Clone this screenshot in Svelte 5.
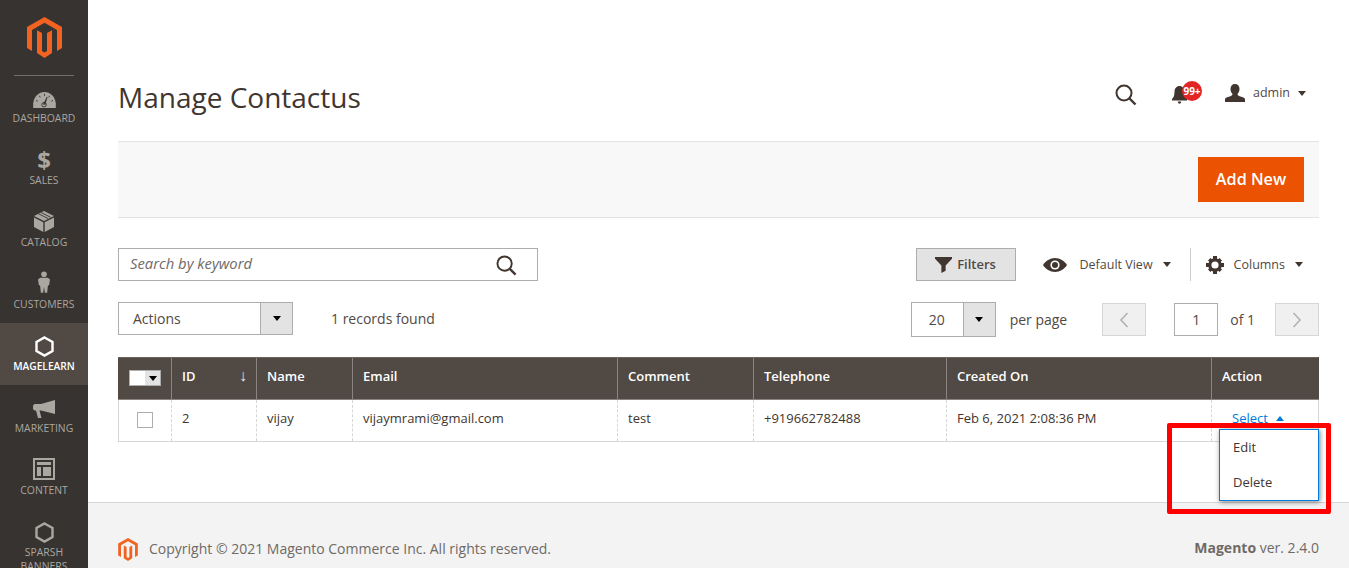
<script>
	const nav = [
		{ label: 'Dashboard', icon: 'gauge' },
		{ label: 'Sales', icon: 'dollar' },
		{ label: 'Catalog', icon: 'box' },
		{ label: 'Customers', icon: 'person' },
		{ label: 'Magelearn', icon: 'hex', active: true },
		{ label: 'Marketing', icon: 'horn' },
		{ label: 'Content', icon: 'layout' },
		{ label: 'Sparsh Banners', icon: 'hex' }
	];
	const columns = [
		{ label: 'Name', width: 96 },
		{ label: 'Email', width: 265 },
		{ label: 'Comment', width: 136 },
		{ label: 'Telephone', width: 193 },
		{ label: 'Created On', width: 265 }
	];
	const row = ['vijay', 'vijaymrami@gmail.com', 'test', '+919662782488', 'Feb 6, 2021 2:08:36 PM'];
</script>

{#snippet logo(cls)}
	<svg class={cls} viewBox="0 0 35 41">
		<path d="M17.5 0 35 10v21l-5 2.9V13L17.5 5.8 5 13v20.9L0 31V10z" fill="#f26322" />
		<path d="M10 13.2v22.9l7.5 4.9 7.5-4.9V13.2l-5 2.9V34l-2.5 1.5L15 34V16.1z" fill="#f26322" />
	</svg>
{/snippet}

{#snippet search(cls)}
	<svg class={cls} viewBox="0 0 22 22">
		<circle cx="9" cy="9" r="7.5" fill="none" stroke="#41362f" stroke-width="2" />
		<path d="m14.5 14.5 6 6" stroke="#41362f" stroke-width="2.4" />
	</svg>
{/snippet}

<div class="page">
	<aside class="sidebar">
		<div class="logo-wrap">
			{@render logo('logo')}
		</div>
		<nav>
			{#each nav as item}
				<a class="nav-item" class:active={item.active} href="#top">
					<span class="nav-icon">
						{#if item.icon === 'gauge'}
							<svg width="23" height="16" viewBox="0 0 24 17">
								<path d="M0 17v-5C1 4.500 6 0 12 0s11 4.500 12 12v5z" fill="currentColor" />
								<path d="m10.500 13 4-8 .8.4-2.600 8.400z" fill="#373330" />
								<circle cx="11.500" cy="13.500" r="2.400" fill="none" stroke="#373330" stroke-width="1" />
								<path d="M12 2v2M6.500 4l1 1.600M17.500 4l-1 1.600M3 9l1.800.8M21 9l-1.800.8" stroke="#373330" stroke-width="1" />
							</svg>
						{:else if item.icon === 'dollar'}
							<span class="dollar">$</span>
						{:else if item.icon === 'box'}
							<svg width="20" height="21" viewBox="0 0 20 21">
								<path d="M10 0 20 5 10 10 0 5z" fill="currentColor" />
								<path d="M4.500 2.800 14.200 7.600M7 1.500 16.700 6.300" stroke="#373330" stroke-width=".9" />
								<path d="M0 6.500 9.300 11.300V21L0 16zM20 6.500V16L10.700 21V11.300z" fill="currentColor" />
							</svg>
						{:else if item.icon === 'person'}
							<svg width="12" height="24" viewBox="0 0 14 25">
								<circle cx="7" cy="3.500" r="3.300" fill="currentColor" />
								<path d="M2.500 7.500h9L14 9.500 13 16l-1.500 1-.8 8H8l-1-7-1 7H3.300l-.8-8L1 16 0 9.500z" fill="currentColor" />
							</svg>
						{:else if item.icon === 'hex'}
							<svg class="hex" width="19" height="21" viewBox="0 0 19 21">
								<path d="M9.500 1.500 17.500 6v9l-8 4.500-8-4.500V6z" fill="none" stroke="currentColor" stroke-width="2.400" />
							</svg>
						{:else if item.icon === 'horn'}
							<svg width="22" height="18" viewBox="0 0 22 18">
								<path d="M22 0v14L8 10.500H6.500L8.500 18H5L3 10.500H1.500L0 9V5.500L1.500 4H8z" fill="currentColor" />
							</svg>
						{:else if item.icon === 'layout'}
							<svg width="22" height="22" viewBox="0 0 22 22">
								<path d="M0 0h22v22H0zM2 2v18h18V2z" fill="currentColor" />
								<path d="M4 4h14v3H4zM4 9h4v9H4zM10 9h8v9h-8z" fill="currentColor" />
							</svg>
						{/if}
					</span>
					<span class="nav-label">{item.label}</span>
				</a>
			{/each}
		</nav>
	</aside>

	<div class="main">
		<div class="content">
			<header class="page-header">
				<h1>Manage Contactus</h1>
				<div class="header-tools">
					{@render search('head-search')}
					<span class="bell">
						<svg width="15" height="18" viewBox="0 0 15 18">
							<path d="M7.500 0C10.500 0 12.500 2.500 12.500 6c0 4 1 5.500 2.500 7v1.500H0V13c1.500-1.500 2.500-3 2.500-7 0-3.500 2-6 5-6zM5.800 15.500h3.400c0 1.300-.7 2.200-1.700 2.200s-1.700-.9-1.700-2.200z" fill="#41362f" />
						</svg>
						<span class="badge">99+</span>
					</span>
					<span class="user">
						<svg width="20" height="18" viewBox="0 0 20 18">
							<path d="M10 0c3 0 4.500 2 4.500 5 0 2-.8 3.800-2 5 .2 1 .6 1.500 1.500 2 3 1 5.500 1.500 6 3v3H0v-3c.5-1.500 3-2 6-3 .9-.5 1.300-1 1.500-2-1.200-1.200-2-3-2-5 0-3 1.500-5 4.500-5z" fill="#41362f" />
						</svg>
						<span class="user-name">admin</span>
						<i class="caret"></i>
					</span>
				</div>
			</header>

			<div class="action-bar">
				<button class="add-new">Add New</button>
			</div>

			<div class="grid-top">
				<div class="search-box">
					<span class="placeholder">Search by keyword</span>
					{@render search('box-search')}
				</div>
				<div class="grid-controls">
					<button class="filters">
						<svg width="17" height="16" viewBox="0 0 16 15">
							<path d="M0 0h16v1.500L10 8v5l-4 2V8L0 1.500z" fill="#41362f" />
						</svg>
						<span>Filters</span>
					</button>
					<span class="view">
						<svg width="24" height="14" viewBox="0 0 24 14">
							<path d="M12 0c5 0 9.500 3 12 7-2.500 4-7 7-12 7S2.500 11 0 7c2.500-4 7-7 12-7z" fill="#41362f" />
							<circle cx="12" cy="7" r="4.600" fill="#fff" />
							<circle cx="12" cy="7" r="3" fill="#41362f" />
						</svg>
						<span class="view-label">Default View</span>
						<i class="caret"></i>
					</span>
					<span class="columns">
						<svg width="18" height="18" viewBox="0 0 18 18">
							<circle cx="9" cy="9" r="5.200" fill="none" stroke="#41362f" stroke-width="3.200" />
							<path d="M7 0h4v3H7zM7 15h4v3H7zM0 7h3v4H0zM15 7h3v4h-3zM2 4.500 4.500 2l2 2L4 6.500zM13.500 2 16 4.500l-2 2L11.500 4zM2 13.500 4.500 16l2-2L4 11.500zM16 13.500 13.500 16l-2-2 2.500-2.500z" fill="#41362f" />
						</svg>
						<span class="view-label">Columns</span>
						<i class="caret"></i>
					</span>
				</div>
			</div>

			<div class="grid-pager">
				<div class="select actions-select">
					<span class="select-value">Actions</span>
					<span class="select-arrow"><i class="caret dark"></i></span>
				</div>
				<span class="records">1 records found</span>
				<div class="pager">
					<div class="select per-page">
						<span class="select-value">20</span>
						<span class="select-arrow"><i class="caret dark"></i></span>
					</div>
					<span class="per-label">per page</span>
					<span class="page-btn prev">
						<svg width="10" height="16" viewBox="0 0 10 16"><path d="M8.500 1 2 8l6.500 7" fill="none" stroke="#b5b2ae" stroke-width="1.600" /></svg>
					</span>
					<span class="page-input">1</span>
					<span class="of">of 1</span>
					<span class="page-btn">
						<svg width="10" height="16" viewBox="0 0 10 16"><path d="M1.500 1 8 8l-6.500 7" fill="none" stroke="#b5b2ae" stroke-width="1.600" /></svg>
					</span>
				</div>
			</div>

			<table class="grid">
				<colgroup>
					<col style="width: 53px" />
					<col style="width: 85px" />
					{#each columns as c}
						<col style="width: {c.width}px" />
					{/each}
					<col />
				</colgroup>
				<thead>
					<tr>
						<th class="check-col">
							<span class="multi"><i class="multi-box"></i><i class="multi-arrow"><i class="caret small"></i></i></span>
						</th>
						<th class="id-col">ID<span class="sort">↓</span></th>
						{#each columns as c}
							<th>{c.label}</th>
						{/each}
						<th>Action</th>
					</tr>
				</thead>
				<tbody>
					<tr>
						<td class="check-col"><i class="checkbox"></i></td>
						<td>2</td>
						{#each row as value}
							<td>{value}</td>
						{/each}
						<td class="action-cell"><a href="#top" class="select-link">Select<i class="caret up"></i></a></td>
					</tr>
				</tbody>
			</table>
		</div>

		<footer class="footer">
			<div class="copyright">
				{@render logo('footer-logo')}
				<span>Copyright © 2021 Magento Commerce Inc. All rights reserved.</span>
			</div>
			<div class="version">
				<div><strong>Magento</strong> ver. 2.4.0</div>
				<a href="#top">Account Activity</a>
			</div>
		</footer>

		<div class="row-menu">
			<a href="#top">Edit</a>
			<a href="#top">Delete</a>
		</div>
		<div class="highlight"></div>
	</div>
</div>

<style>
	:global(body) {
		margin: 0;
		overflow: hidden;
		background: #fff;
		font-family: 'Open Sans', sans-serif;
		color: #41362f;
	}
	.page {
		display: flex;
		height: 568px;
		overflow: hidden;
	}
	.sidebar {
		flex: 0 0 88px;
		background: #373330;
	}
	.logo-wrap {
		height: 76px;
		box-sizing: border-box;
		padding-top: 17px;
		margin: 0 14px -1px;
		border-bottom: 1px solid #736e6a;
		display: flex;
		justify-content: center;
	}
	.logo {
		width: 35px;
		height: 41px;
	}
	.nav-item {
		height: 62px;
		display: flex;
		flex-direction: column;
		align-items: center;
		color: #aaa6a0;
		text-decoration: none;
	}
	.nav-item.active {
		background: #514943;
		color: #fff;
	}
	.nav-icon {
		height: 33px;
		flex: 0 0 33px;
		margin-bottom: 3px;
		display: flex;
		align-items: flex-end;
		justify-content: center;
	}
	.nav-icon .hex {
		position: relative;
		top: 1px;
	}
	.dollar {
		font: 700 24px/20px 'Open Sans', sans-serif;
	}
	.nav-label {
		font-size: 10.4px;
		line-height: 14px;
		text-transform: uppercase;
		text-align: center;
		width: 70px;
	}
	.active .nav-label {
		font-size: 10.2px;
		font-weight: 600;
	}
	.main {
		flex: 1;
		position: relative;
		display: flex;
		flex-direction: column;
		min-width: 0;
	}
	.content {
		height: 502px;
		box-sizing: border-box;
		padding: 0 30px;
	}
	.page-header {
		height: 141px;
		display: flex;
		justify-content: space-between;
		align-items: flex-start;
	}
	h1 {
		margin: 77px 0 0;
		font-size: 28px;
		line-height: 40px;
		font-weight: 400;
	}
	.header-tools {
		display: flex;
		align-items: center;
		height: 24px;
		margin-top: 81px;
		margin-right: 13px;
	}
	.head-search {
		width: 22px;
		height: 22px;
		margin-right: 35px;
		position: relative;
		top: 2px;
	}
	.bell {
		position: relative;
		display: block;
		width: 15px;
		height: 18px;
		margin-right: 38px;
		margin-top: 3px;
	}
	.bell svg {
		display: block;
	}
	.badge {
		position: absolute;
		left: 10px;
		top: -5px;
		width: 20px;
		height: 20px;
		border-radius: 50%;
		background: #e22626;
		color: #fff;
		font-size: 10px;
		font-weight: 700;
		line-height: 20px;
		text-align: center;
	}
	.user {
		display: flex;
		align-items: center;
	}
	.user-name {
		font-size: 12.5px;
		margin-left: 8px;
		margin-right: 8px;
		color: #514943;
		position: relative;
		top: -1px;
	}
	.caret {
		display: inline-block;
		width: 0;
		height: 0;
		border-left: 4px solid transparent;
		border-right: 4px solid transparent;
		border-top: 5px solid #41362f;
	}
	.caret.dark {
		border-top-color: #000;
	}
	.caret.small {
		border-top: 5px solid #000;
	}
	.caret.up {
		border-top: 0;
		border-bottom: 5px solid #007bdb;
		margin-left: 8px;
		vertical-align: 2px;
	}
	.action-bar {
		height: 77px;
		box-sizing: border-box;
		border-top: 1px solid #e3e3e3;
		border-bottom: 1px solid #e3e3e3;
		background: #f8f8f8;
		display: flex;
		justify-content: flex-end;
		padding: 15px 15px 0 0;
	}
	.add-new {
		width: 106px;
		height: 45px;
		border: 0;
		padding: 0 0 2px;
		background: #eb5202;
		color: #fff;
		font: 600 16.2px 'Open Sans', sans-serif;
	}
	.grid-top {
		display: flex;
		justify-content: space-between;
		margin-top: 30px;
		height: 33px;
	}
	.search-box {
		width: 420px;
		box-sizing: border-box;
		border: 1px solid #adadad;
		display: flex;
		align-items: center;
		justify-content: space-between;
		padding: 0 20px 0 11px;
	}
	.placeholder {
		font-style: italic;
		font-size: 14.8px;
		color: #6f6a66;
		position: relative;
		top: -2px;
	}
	.box-search {
		width: 21px;
		height: 21px;
		margin-top: 1px;
	}
	.grid-controls {
		display: flex;
		align-items: center;
		height: 33px;
	}
	.filters {
		width: 100px;
		height: 33px;
		box-sizing: border-box;
		border: 1px solid #adadad;
		background: #e3e3e3;
		color: #514943;
		font: 600 13px 'Open Sans', sans-serif;
		display: flex;
		align-items: center;
		justify-content: center;
		gap: 5px;
		padding: 0;
	}
	.filters span {
		position: relative;
		top: -1px;
	}
	.view {
		display: flex;
		align-items: center;
		margin-left: 27px;
		padding-right: 19px;
		height: 33px;
		border-right: 1px solid #ccc;
	}
	.view-label {
		font-size: 12.5px;
		color: #514943;
		margin: 0 10px 0 13px;
	}
	.columns {
		display: flex;
		align-items: center;
		margin-left: 15px;
		margin-right: 16px;
	}
	.columns .view-label {
		margin: 0 10px 0 10px;
	}
	.grid-pager {
		display: flex;
		align-items: flex-start;
		margin-top: 21px;
		height: 33px;
	}
	.select {
		height: 33px;
		box-sizing: border-box;
		border: 1px solid #adadad;
		display: flex;
		font-size: 14px;
	}
	.select-value {
		flex: 1;
		line-height: 31px;
		color: #41362f;
	}
	.select-arrow {
		width: 31px;
		background: #e3e3e3;
		border-left: 1px solid #adadad;
		display: flex;
		align-items: center;
		justify-content: center;
	}
	.actions-select {
		width: 175px;
	}
	.actions-select .select-value {
		padding-left: 14px;
		color: #514943;
	}
	.records {
		margin-left: 38px;
		font-size: 14px;
		line-height: 33px;
		color: #514943;
	}
	.pager {
		margin-left: auto;
		height: 35px;
		display: flex;
		align-items: center;
	}
	.per-page {
		width: 85px;
		height: 35px;
	}
	.per-page .select-value {
		padding-left: 17px;
		line-height: 33px;
		color: #514943;
	}
	.per-label {
		margin: 0 35px 0 14px;
		font-size: 14px;
		color: #514943;
	}
	.page-btn {
		width: 44px;
		height: 33px;
		box-sizing: border-box;
		border: 1px solid #d6d6d6;
		background: #f0f0f0;
		display: flex;
		align-items: center;
		justify-content: center;
	}
	.page-input {
		width: 44px;
		height: 33px;
		box-sizing: border-box;
		border: 1px solid #adadad;
		margin-left: 28px;
		font-size: 14px;
		line-height: 31px;
		text-align: center;
		color: #514943;
	}
	.of {
		margin: 0 20px 0 12px;
		font-size: 14px;
		color: #514943;
	}
	.grid {
		margin-top: 22px;
		width: 1201px;
		border-collapse: collapse;
		table-layout: fixed;
		font-size: 13px;
	}
	.grid th {
		height: 42px;
		box-sizing: border-box;
		padding: 0 10px 5px;
		background: #514943;
		color: #fff;
		font-weight: 600;
		text-align: left;
		border-left: 1px solid #8a837f;
		border-bottom: 1px solid #8a837f;
		border-top: 1px solid #6b625c;
	}
	.grid th:first-child {
		border-left-color: #514943;
	}
	.grid th:last-child {
		border-right: 1px solid #514943;
	}
	.id-col {
		position: relative;
	}
	.sort {
		position: absolute;
		right: 9px;
		top: 6px;
		font-size: 16px;
		font-weight: 400;
		color: #e3e3e3;
	}
	.grid td {
		height: 42px;
		box-sizing: border-box;
		padding: 0 10px 5px;
		color: #41362f;
		border-left: 1px dashed #d6d6d6;
		border-bottom: 1px solid #d6d6d6;
	}
	.grid td:first-child {
		border-left: 1px solid #d6d6d6;
	}
	.grid td:last-child {
		border-right: 1px solid #d6d6d6;
	}
	.grid th.check-col {
		padding: 0 0 3px;
		text-align: center;
	}
	.grid td.check-col {
		padding: 0 0 3px;
		text-align: center;
	}
	.grid td.action-cell {
		padding-left: 20px;
	}
	.multi {
		display: inline-flex;
		vertical-align: middle;
		border: 1px solid #adadad;
	}
	.multi-box {
		display: block;
		width: 15px;
		height: 14px;
		background: #fff;
	}
	.multi-arrow {
		display: flex;
		align-items: center;
		justify-content: center;
		width: 15px;
		height: 14px;
		background: #e3e3e3;
	}
	.checkbox {
		display: inline-block;
		width: 14px;
		height: 14px;
		border: 1px solid #adadad;
		vertical-align: middle;
	}
	.select-link {
		color: #007bdb;
		text-decoration: none;
	}
	.footer {
		flex: 1;
		background: #f3f3f3;
		border-top: 1px solid #d6d6d6;
		padding: 33px 30px 0;
		display: flex;
		justify-content: space-between;
		align-items: flex-start;
		font-size: 14px;
		color: #6f6a66;
		overflow: hidden;
	}
	.copyright {
		display: flex;
		align-items: center;
		gap: 11px;
	}
	.footer-logo {
		width: 20px;
		height: 23px;
		margin-top: 2px;
	}
	.version {
		text-align: right;
		line-height: 20px;
		padding-top: 2px;
	}
	.version a {
		display: block;
		margin-top: 6px;
		color: #eb5202;
		text-decoration: none;
	}
	.row-menu {
		position: absolute;
		left: 1131px;
		top: 429px;
		width: 100px;
		height: 72px;
		box-sizing: border-box;
		border: 1px solid #007bdb;
		background: #fff;
		box-shadow: 1px 1px 5px rgba(0, 0, 0, 0.5);
		font-size: 13px;
	}
	.row-menu a {
		display: block;
		height: 35px;
		line-height: 34px;
		padding-left: 13px;
		color: #41362f;
		text-decoration: none;
	}
	.highlight {
		position: absolute;
		left: 1079px;
		top: 423px;
		width: 164px;
		height: 91px;
		box-sizing: border-box;
		border: 5px solid #f00;
		border-radius: 2px;
		pointer-events: none;
	}
</style>
